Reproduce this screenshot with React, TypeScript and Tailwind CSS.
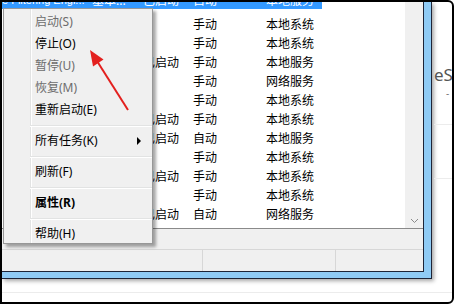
import React from "react";

type Row = { status?: string; start: string; logon: string };

const rows: Row[] = [
  { start: "手动", logon: "本地系统" },
  { start: "手动", logon: "本地系统" },
  { status: "已启动", start: "手动", logon: "本地服务" },
  { start: "手动", logon: "网络服务" },
  { start: "手动", logon: "本地系统" },
  { status: "已启动", start: "手动", logon: "本地系统" },
  { status: "已启动", start: "自动", logon: "本地服务" },
  { start: "手动", logon: "本地系统" },
  { status: "已启动", start: "手动", logon: "本地系统" },
  { start: "手动", logon: "本地系统" },
  { status: "已启动", start: "自动", logon: "网络服务" },
];

type Item = { label: string; disabled?: boolean; bold?: boolean; sub?: boolean } | "sep";

const menu: Item[] = [
  { label: "启动(S)", disabled: true },
  { label: "停止(O)" },
  { label: "暂停(U)", disabled: true },
  { label: "恢复(M)", disabled: true },
  { label: "重新启动(E)" },
  "sep",
  { label: "所有任务(K)", sub: true },
  "sep",
  { label: "刷新(F)" },
  "sep",
  { label: "属性(R)", bold: true },
  "sep",
  { label: "帮助(H)" },
];

function ServiceList() {
  return (
    <div className="flex-1 overflow-hidden bg-white text-black">
      <div className="h-[7px] w-[320px] overflow-hidden bg-[#3399ff] text-white">
        <div className="-mt-[11px] flex h-[19px] items-center">
          <span className="w-[90px] shrink-0 overflow-hidden whitespace-nowrap font-['Liberation_Sans',sans-serif] text-[11px]">
            e Filtering Engi...
          </span>
          <span className="w-[51px] shrink-0 whitespace-nowrap">基本...</span>
          <span className="w-[50px] shrink-0">已启动</span>
          <span className="w-[73px] shrink-0">自动</span>
          <span>本地服务</span>
        </div>
      </div>
      <div className="mt-[6px]">
        {rows.map((r, i) => (
          <div key={i} className="flex h-[19px] items-center">
            <span className="w-[141px]" />
            <span className="w-[50px]">{r.status}</span>
            <span className="w-[73px]">{r.start}</span>
            <span>{r.logon}</span>
          </div>
        ))}
      </div>
    </div>
  );
}

function ContextMenu() {
  return (
    <div className="absolute left-[3px] top-[8px] w-[150px] h-[236px] border border-[#979797] bg-[#f0f0f0] bg-[linear-gradient(to_right,transparent_26px,#e2e3e3_26px,#e2e3e3_27px,#ffffff_27px,#ffffff_28px,transparent_28px)] pt-[2px] shadow-[3px_3px_3px_rgba(0,0,0,0.35)]">
      {menu.map((m, i) =>
        m === "sep" ? (
          <div key={i} className="flex h-[9px] items-center pl-[26px]">
            <div className="h-[2px] w-full border-t border-[#e2e3e3] border-b border-b-white" />
          </div>
        ) : (
          <div
            key={i}
            className={`flex h-[22px] items-center justify-between pl-[31px] pr-[11px] ${
              m.disabled ? "text-[#6d6d6d]" : "text-black"
            } ${m.bold ? "font-bold" : ""}`}
          >
            <span>{m.label}</span>
            {m.sub && (
              <span className="h-0 w-0 border-y-[4px] border-l-[4px] border-y-transparent border-l-black" />
            )}
          </div>
        )
      )}
    </div>
  );
}

export default function App() {
  return (
    <div className="relative h-[306px] w-[456px] overflow-hidden bg-white font-['Noto_Sans','Noto_Sans_CJK_SC',sans-serif] text-[12px]">
      <div className="flex h-[304px] w-[454px] flex-col overflow-hidden rounded-r-[6px] border-2 border-black bg-white">
        <div className="flex h-[281px]">
          {/* services window */}
          <div className="h-[277px] w-[430px] shrink-0 border-b border-r border-[#1d2437] shadow-[2px_2px_4px_rgba(0,0,0,0.35)]">
            <div className="h-full border-b-[6px] border-r-[7px] border-[#8fcbf5]">
              <div className="flex h-full flex-col border-b border-r border-[#1d2437] bg-white">
                <div className="flex h-[226px]">
                  <ServiceList />
                  <div className="flex w-[18px] flex-col items-center justify-end bg-[#f0f0f0] pb-[4px]">
                    <svg width="9" height="6" viewBox="0 0 9 6">
                      <path d="M1 1 L4.5 4.5 L8 1" fill="none" stroke="#8a8a8a" strokeWidth="1" />
                    </svg>
                  </div>
                </div>
                <div className="h-[21px] border-t border-[#8a8a8a] bg-[#f0f0f0]" />
                <div className="flex h-[22px] border-t border-[#d7d7d7] bg-[#f0f0f0]">
                  <div className="w-[201px] border-r border-[#d7d7d7]" />
                  <div className="w-[133px] border-r border-[#d7d7d7]" />
                  <div className="flex-1" />
                </div>
              </div>
            </div>
          </div>
          {/* background window */}
          <div className="flex flex-1 flex-col pl-[2px]">
            <div className="mt-[62px] whitespace-nowrap text-[17px] leading-[22px] text-[#555555]">eS</div>
            <div className="ml-[12px] mt-[2px] text-[10px] leading-[10px] text-[#777777]">-</div>
            <div className="mt-[26px] h-px bg-[#ececec]" />
            <div className="mt-[53px] h-px bg-[#ececec]" />
          </div>
        </div>
        <div className="flex-1">
          <div className="mt-[9px] h-px bg-[#ececec]" />
        </div>
      </div>

      <ContextMenu />

      <svg className="absolute left-0 top-0" width="456" height="306">
        <line x1="128" y1="110" x2="97" y2="61" stroke="#e3201e" strokeWidth="2" />
        <polygon points="90,50 103.5,59.5 93,66.5" fill="#e3201e" />
      </svg>
    </div>
  );
}
